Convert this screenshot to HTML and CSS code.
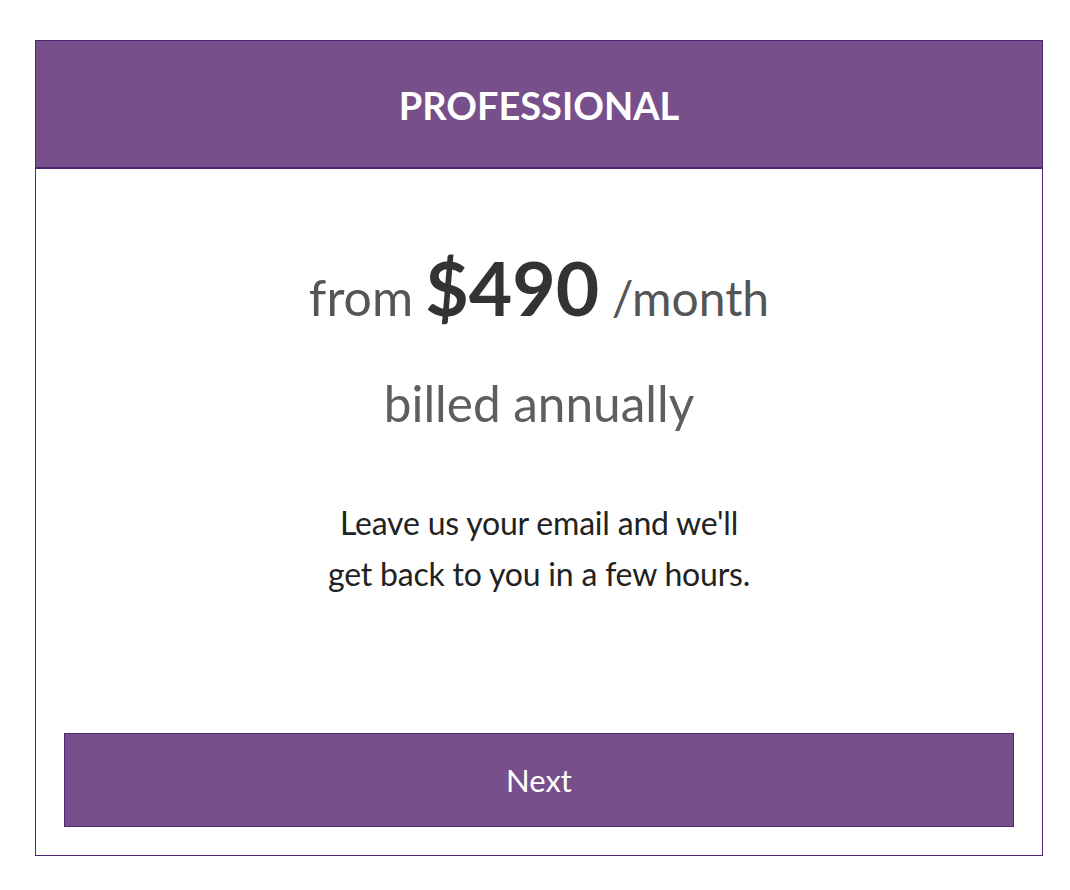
FILE: index.html
```html
<!DOCTYPE html>
<html>
<head>
<meta charset="utf-8">
<link rel="stylesheet" href="styles.css">
</head>
<body>
<div class="card">
  <div class="card-header">PROFESSIONAL</div>
  <div class="card-body">
    <div class="price"><span class="from">from</span> <span class="amount">$490</span> <span class="per">/month</span></div>
    <div class="billed">billed annually</div>
    <p class="note">Leave us your email and we'll<br>get back to you in a few hours.</p>
    <button class="next">Next</button>
  </div>
</div>
</body>
</html>
```
FILE: styles.css
```css
html, body {
  margin: 0;
  padding: 0;
  background: #ffffff;
}
body {
  padding: 40px 27px 0 35px;
  font-family: Lato, "Open Sans", sans-serif;
}
.card {
  width: 1008px;
  height: 816px;
  box-sizing: border-box;
  border: 1px solid #4b2673;
  display: flex;
  flex-direction: column;
}
.card-header {
  height: 128px;
  box-sizing: border-box;
  background: #77508b;
  border-bottom: 2px solid #4b2673;
  color: #ffffff;
  font-weight: 700;
  font-size: 38px;
  display: flex;
  align-items: center;
  justify-content: center;
  padding-top: 2px;
}
.card-body {
  flex: 1;
  display: flex;
  flex-direction: column;
  align-items: center;
  padding: 0 28px 28px;
}
.price {
  margin-top: 82px;
  color: #555555;
  font-size: 48px;
  line-height: 72px;
}
.from {
  font-size: 50px;
}
.amount {
  color: #333333;
  font-weight: 700;
  font-size: 75px;
}
.billed {
  margin-top: 39px;
  color: #5e5e5e;
  font-size: 49.5px;
  line-height: 60px;
}
.note {
  margin: 64px 0 0;
  color: #222222;
  font-size: 32px;
  line-height: 51px;
  text-align: center;
  letter-spacing: -0.2px;
}
.next {
  margin-top: auto;
  width: 950px;
  height: 94px;
  background: #77508b;
  border: 1px solid #4b2673;
  color: #ffffff;
  font-family: Lato, "Open Sans", sans-serif;
  font-size: 31px;
  padding: 0;
}
```
